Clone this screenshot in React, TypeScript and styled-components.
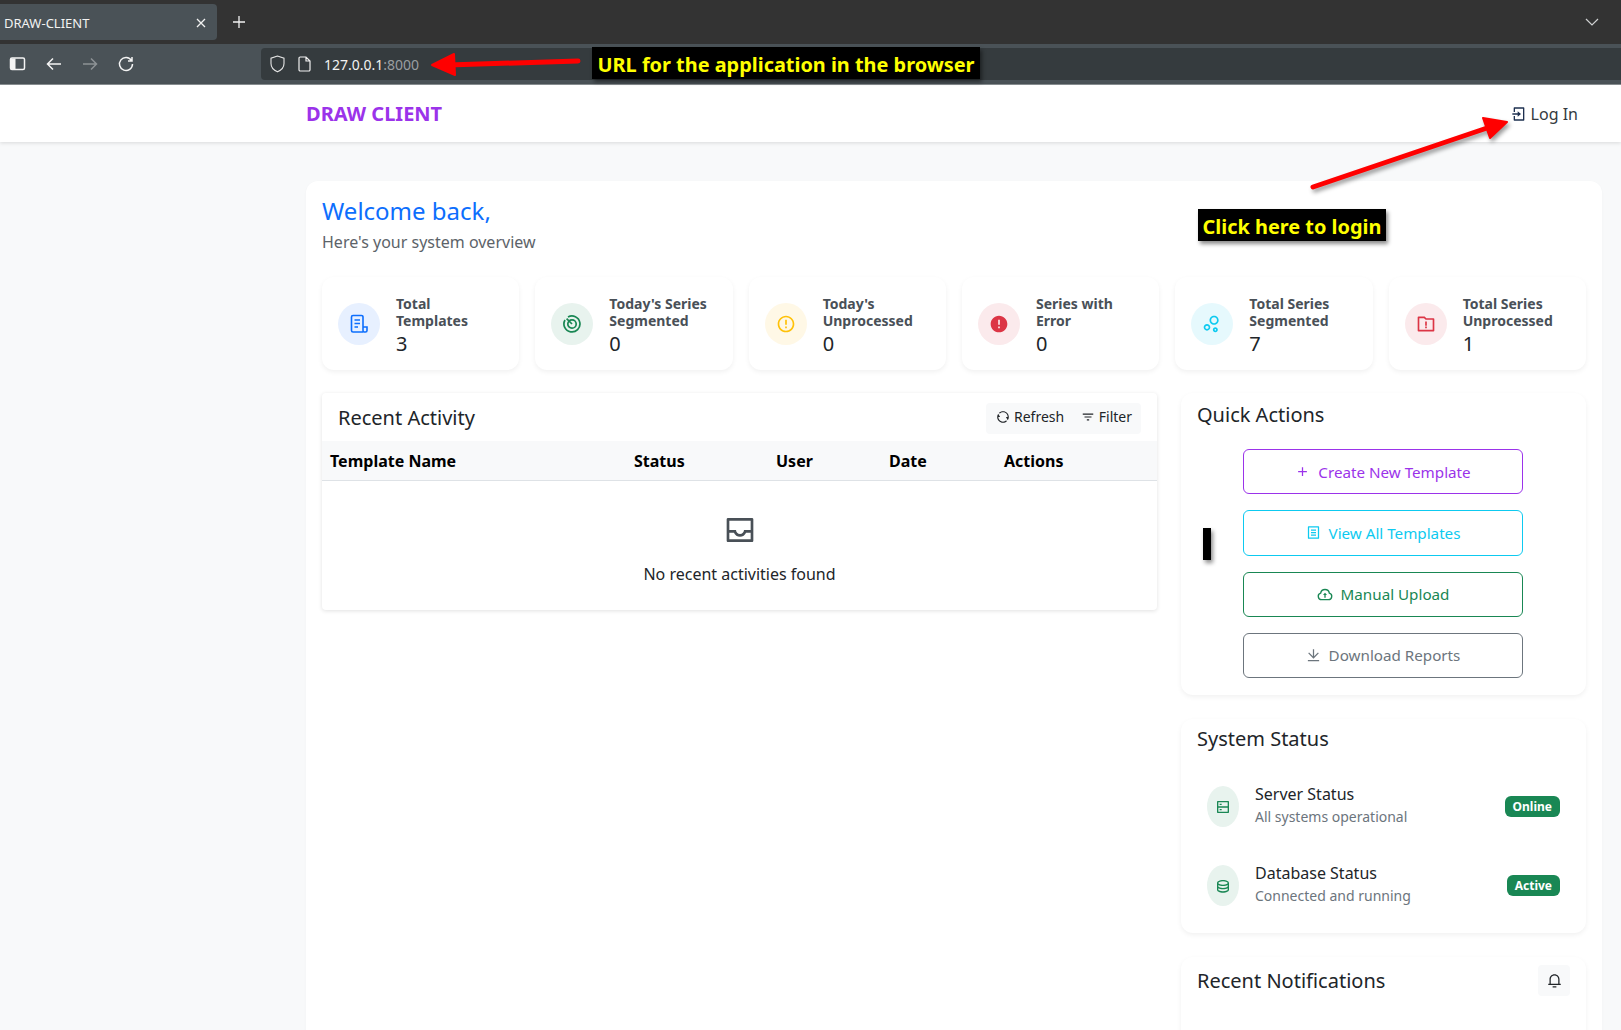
import React from "react";
import styled, { createGlobalStyle } from "styled-components";
import {
  RiAddLine,
  RiBubbleChartLine,
  RiDatabase2Line,
  RiDownloadLine,
  RiErrorWarningFill,
  RiErrorWarningLine,
  RiFileListLine,
  RiFilter3Line,
  RiFolderWarningLine,
  RiInboxLine,
  RiLoginBoxLine,
  RiNotification3Line,
  RiRefreshLine,
  RiServerLine,
} from "react-icons/ri";

const GlobalStyle = createGlobalStyle`
  html, body {
    margin: 0;
    padding: 0;
    background: #f8f9fa;
    overflow: hidden;
  }
  * { box-sizing: border-box; }
  body {
    font-family: "Noto Sans", "Liberation Sans", sans-serif;
    color: #212529;
  }
`;

const Root = styled.div`
  position: relative;
  width: 1621px;
  height: 1030px;
  overflow: hidden;
`;

/* browser chrome */
const TabStrip = styled.div`
  height: 44px;
  background: #333333;
  display: flex;
  align-items: center;
  justify-content: space-between;
  padding: 0 22px 0 0;
`;

const TabGroup = styled.div`
  display: flex;
  align-items: center;
`;

const Tab = styled.div`
  width: 217px;
  height: 36px;
  background: #4a5257;
  border-radius: 0 4px 4px 0;
  color: #f2f2f2;
  font-size: 13px;
  display: flex;
  align-items: center;
  justify-content: space-between;
  padding: 1px 11px 0 4px;
`;

const NewTab = styled.div`
  margin-left: 15px;
  display: flex;
`;

const Toolbar = styled.div`
  height: 41px;
  background: #4a5257;
  border-bottom: 1px solid #8a9094;
  display: flex;
  align-items: flex-start;
  padding: 4px 0 0 9px;
`;

const ToolIcons = styled.div`
  width: 252px;
  height: 32px;
  display: flex;
  align-items: center;
  gap: 18px;
`;

const ToolGlyph = styled.span<{ $dim?: boolean }>`
  display: flex;
  color: ${(p) => (p.$dim ? "#8d9295" : "#f4f4f4")};
`;

const UrlBar = styled.div`
  flex: 1;
  height: 32px;
  background: #353b3e;
  border-radius: 4px 0 0 4px;
  display: flex;
  align-items: center;
  padding-left: 9px;
  gap: 13px;
  font-size: 14px;
  color: #f2f2f2;
`;

const UrlPort = styled.span`
  color: #9a9ea1;
`;

const UrlGlyph = styled.span`
  display: flex;
`;

/* page nav */
const Nav = styled.nav`
  height: 57px;
  background: #ffffff;
  box-shadow: 0 1px 4px rgba(0, 0, 0, 0.13);
  display: flex;
  align-items: center;
  justify-content: space-between;
  padding: 0 43px 0 306px;
  position: relative;
`;

const Brand = styled.div`
  font-size: 20px;
  font-weight: 700;
  color: #9b33ea;
`;

const LoginLink = styled.div`
  display: flex;
  align-items: center;
  gap: 4px;
  font-size: 16px;
  color: #343a40;
  svg { color: #1e3050; }
`;

/* dashboard */
const Page = styled.main`
  padding: 39px 19px 0 306px;
`;

const MainCard = styled.section`
  background: #ffffff;
  border-radius: 12px 12px 0 0;
  padding: 15px 16px 0;
  height: 900px;
  box-shadow: 0 1px 3px rgba(0, 0, 0, 0.03);
`;

const Welcome = styled.h1`
  margin: 0;
  font-size: 24px;
  font-weight: 400;
  line-height: 29px;
  color: #0d6efd;
`;

const Overview = styled.p`
  margin: 5px 0 0;
  font-size: 16px;
  line-height: 24px;
  color: #5c6369;
`;

const StatGrid = styled.div`
  display: grid;
  grid-template-columns: repeat(6, 1fr);
  gap: 16px;
  margin-top: 23px;
`;

const StatCard = styled.div`
  height: 93px;
  background: #ffffff;
  border-radius: 12px;
  box-shadow: 0 2px 5px rgba(0, 0, 0, 0.06);
  display: flex;
  align-items: center;
  gap: 16px;
  padding: 0 16px;
`;

const StatIcon = styled.div<{ $bg: string; $fg: string }>`
  flex: none;
  width: 42px;
  height: 42px;
  border-radius: 50%;
  background: ${(p) => p.$bg};
  color: ${(p) => p.$fg};
  display: flex;
  align-items: center;
  justify-content: center;
  font-size: 20px;
`;

const StatBody = styled.div`
  padding-top: 4px;
`;

const StatTitle = styled.div`
  font-size: 14px;
  font-weight: 700;
  line-height: 17px;
  color: #495057;
`;

const StatValue = styled.div`
  font-size: 20px;
  line-height: 27px;
  margin-top: 1px;
`;

const Columns = styled.div`
  display: grid;
  grid-template-columns: 835px 405px;
  gap: 24px;
  margin-top: 23px;
  align-items: start;
`;

const Side = styled.div`
  display: flex;
  flex-direction: column;
  gap: 24px;
`;

const Panel = styled.div<{ $grow?: boolean }>`
  background: #ffffff;
  border-radius: 12px;
  box-shadow: 0 2px 5px rgba(0, 0, 0, 0.06);
  padding: 6px 16px 8px;
  min-height: ${(p) => (p.$grow ? "200px" : "0")};
`;

const ActionsPanel = styled(Panel)`
  padding: 8px 16px 17px;
`;

const ActivityPanel = styled.div`
  background: #ffffff;
  border-radius: 4px;
  box-shadow: 0 1px 4px rgba(0, 0, 0, 0.12);
  height: 217px;
`;

const ActivityHead = styled.div`
  height: 48px;
  display: flex;
  align-items: center;
  justify-content: space-between;
  padding: 2px 16px 0;
`;

const PanelTitle = styled.h2`
  margin: 0;
  font-size: 20px;
  font-weight: 400;
  line-height: 28px;
  color: #212529;
`;

const ToolGroup = styled.div`
  width: 155px;
  height: 31px;
  background: #f8f9fa;
  border-radius: 4px;
  display: flex;
  align-items: center;
  justify-content: space-between;
  padding: 0 9px 3px 10px;
  font-size: 14px;
`;

const ToolItem = styled.span`
  display: flex;
  align-items: center;
  gap: 4px;
`;

const Table = styled.table`
  width: 100%;
  border-collapse: collapse;
  table-layout: fixed;
`;

const HeadCell = styled.th<{ $w?: number }>`
  width: ${(p) => (p.$w ? `${p.$w}px` : "auto")};
  height: 39px;
  padding: 2px 8px 0;
  background: #f8f9fa;
  border-bottom: 1px solid #dee2e6;
  text-align: left;
  font-size: 16px;
  font-weight: 700;
  color: #000000;
`;

const EmptyCell = styled.td`
  padding: 33px 0 0;
  text-align: center;
  font-size: 16px;
  color: #212529;
`;

const EmptyIcon = styled.div`
  height: 36px;
  display: flex;
  justify-content: center;
  color: #495057;
  margin-bottom: 13px;
`;

const ActionList = styled.div`
  width: 280px;
  margin: 20px 0 0 46px;
  display: flex;
  flex-direction: column;
  gap: 16px;
`;

const ActionButton = styled.div<{ $color: string }>`
  height: 45.25px;
  border: 1px solid ${(p) => p.$color};
  border-radius: 6px;
  color: ${(p) => p.$color};
  font-size: 15.2px;
  display: flex;
  align-items: center;
  justify-content: center;
  gap: 8px;
`;

const StatusList = styled.div`
  margin-top: 14px;
`;

const StatusRow = styled.div`
  display: flex;
  align-items: center;
  padding: 0 10px;
  height: 79px;
`;

const StatusIcon = styled.div`
  flex: none;
  width: 32px;
  height: 41px;
  border-radius: 50%;
  background: #e8f3ee;
  color: #198754;
  display: flex;
  align-items: center;
  justify-content: center;
  font-size: 16px;
`;

const StatusText = styled.div`
  flex: 1;
  margin: -3px 0 0 16px;
`;

const StatusName = styled.div`
  font-size: 16px;
  line-height: 22px;
`;

const StatusNote = styled.div`
  font-size: 14px;
  line-height: 22px;
  margin-top: 1px;
  color: #6c757d;
`;

const Badge = styled.span`
  background: #198754;
  color: #ffffff;
  border-radius: 6px;
  font-size: 12px;
  font-weight: 700;
  line-height: 21px;
  padding: 0 8px;
`;

const NoticeHead = styled.div`
  display: flex;
  align-items: center;
  justify-content: space-between;
  padding-top: 2px;
`;

const BellButton = styled.div`
  width: 32px;
  height: 31px;
  background: #f8f9fa;
  border-radius: 4px;
  display: flex;
  align-items: center;
  justify-content: center;
  font-size: 15px;
`;

/* annotations drawn over the shot */
const Note = styled.div<{ $x: number; $y: number; $w: number; $h: number }>`
  position: absolute;
  left: ${(p) => p.$x}px;
  top: ${(p) => p.$y}px;
  width: ${(p) => p.$w}px;
  height: ${(p) => p.$h}px;
  background: #000000;
  color: #ffff00;
  font-size: 19.9px;
  font-weight: 700;
  line-height: ${(p) => p.$h + 3}px;
  text-align: center;
  white-space: nowrap;
  box-shadow: 2px 3px 4px rgba(0, 0, 0, 0.45);
`;

const Overlay = styled.svg`
  position: absolute;
  left: 0;
  top: 0;
  pointer-events: none;
`;

const ShadowedArrow = styled.g`
  filter: drop-shadow(2px 3px 2px rgba(0, 0, 0, 0.4));
`;

const TemplateIcon = () => (
  <svg width="20" height="20" viewBox="0 0 20 20" fill="none" stroke="currentColor" strokeWidth="1.6">
    <path d="M14 18H4a1.5 1.5 0 0 1-1.5-1.5V3A1.5 1.5 0 0 1 4 1.5h8.5A1.5 1.5 0 0 1 14 3v13.5a1.5 1.5 0 0 0 1.7 1.5h.8a1.5 1.5 0 0 0 1.5-1.5V13h-4" />
    <path d="M5.5 6h5.5M5.5 9.5h5.5M5.5 13h3.5" />
  </svg>
);

const SegmentIcon = () => (
  <svg width="20" height="20" viewBox="0 0 20 20" fill="none" stroke="currentColor" strokeWidth="1.7">
    <path d="M6 3A8 8 0 1 1 3 6" />
    <circle cx="10" cy="10" r="4.2" />
    <path d="M4.6 4.6L10 10" />
  </svg>
);

const UploadIcon = () => (
  <svg width="16" height="16" viewBox="0 0 24 24" fill="none" stroke="currentColor" strokeWidth="2">
    <path d="M7 20.5h10a5 5 0 0 0 1.5-9.8 6.6 6.6 0 0 0-13 0 5 5 0 0 0 1.5 9.8z" />
    <path d="M12 17.5v-4" />
    <path d="M9 13.5L12 10l3 3.5z" fill="currentColor" stroke="none" />
  </svg>
);

const stats = [
  { title: ["Total", "Templates"], value: 3, bg: "#e7f0ff", fg: "#0d6efd", icon: <TemplateIcon /> },
  { title: ["Today's Series", "Segmented"], value: 0, bg: "#e8f3ee", fg: "#198754", icon: <SegmentIcon /> },
  { title: ["Today's", "Unprocessed"], value: 0, bg: "#fff8e6", fg: "#ffc107", icon: <RiErrorWarningLine /> },
  { title: ["Series with", "Error"], value: 0, bg: "#fbeaec", fg: "#dc3545", icon: <RiErrorWarningFill /> },
  { title: ["Total Series", "Segmented"], value: 7, bg: "#e6f9fd", fg: "#0dcaf0", icon: <RiBubbleChartLine /> },
  { title: ["Total Series", "Unprocessed"], value: 1, bg: "#fbeaec", fg: "#dc3545", icon: <RiFolderWarningLine /> },
];

const actions = [
  { label: "Create New Template", color: "#9b33ea", icon: <RiAddLine size={15} /> },
  { label: "View All Templates", color: "#0dcaf0", icon: <RiFileListLine size={15} /> },
  { label: "Manual Upload", color: "#198754", icon: <UploadIcon /> },
  { label: "Download Reports", color: "#6c757d", icon: <RiDownloadLine size={15} /> },
];

const Stroke = ({ children }: { children: React.ReactNode }) => (
  <svg width="18" height="18" viewBox="0 0 18 18" fill="none" stroke="currentColor" strokeWidth="1.5">
    {children}
  </svg>
);

export default function App() {
  return (
    <Root>
      <GlobalStyle />
      <TabStrip>
        <TabGroup>
          <Tab>
            DRAW-CLIENT
            <svg width="10" height="10" viewBox="0 0 10 10" stroke="#f2f2f2" strokeWidth="1.3">
              <path d="M1 1l8 8M9 1l-8 8" />
            </svg>
          </Tab>
          <NewTab>
            <svg width="14" height="14" viewBox="0 0 14 14" stroke="#f2f2f2" strokeWidth="1.3">
              <path d="M7 1v12M1 7h12" />
            </svg>
          </NewTab>
        </TabGroup>
        <svg width="14" height="8" viewBox="0 0 14 8" fill="none" stroke="#cfd1d2" strokeWidth="1.2">
          <path d="M1 1l6 6 6-6" />
        </svg>
      </TabStrip>
      <Toolbar>
        <ToolIcons>
          <ToolGlyph>
            <Stroke>
              <rect x="1.5" y="3" width="14" height="11.5" rx="1.5" />
              <rect x="2" y="3.5" width="4.5" height="10.5" fill="currentColor" stroke="none" />
            </Stroke>
          </ToolGlyph>
          <ToolGlyph>
            <Stroke>
              <path d="M16 9H3M8 3.5L2.5 9 8 14.5" />
            </Stroke>
          </ToolGlyph>
          <ToolGlyph $dim>
            <Stroke>
              <path d="M2 9h13M10 3.5L15.5 9 10 14.5" />
            </Stroke>
          </ToolGlyph>
          <ToolGlyph>
            <Stroke>
              <path d="M14.5 5.5A6.5 6.5 0 1 0 15.5 9M15 2v4h-4" />
            </Stroke>
          </ToolGlyph>
        </ToolIcons>
        <UrlBar>
          <UrlGlyph>
            <svg width="15" height="18" viewBox="0 0 15 18" fill="none" stroke="#e6e6e6" strokeWidth="1.1">
              <path d="M7.5 1L1 3.2v5.3c0 4 3 6.8 6.5 8.3 3.5-1.5 6.5-4.3 6.5-8.3V3.2z" />
            </svg>
          </UrlGlyph>
          <UrlGlyph>
            <svg width="13" height="16" viewBox="0 0 13 16" fill="none" stroke="#f0f0f0" strokeWidth="1.2">
              <path d="M1 2.2A1.2 1.2 0 0 1 2.2 1H8l4 4v8.8a1.2 1.2 0 0 1-1.2 1.2H2.2A1.2 1.2 0 0 1 1 13.8zM8 1v4h4" />
            </svg>
          </UrlGlyph>
          <span>
            127.0.0.1<UrlPort>:8000</UrlPort>
          </span>
        </UrlBar>
      </Toolbar>

      <Nav>
        <Brand>DRAW CLIENT</Brand>
        <LoginLink>
          <RiLoginBoxLine size={16} />
          Log In
        </LoginLink>
      </Nav>

      <Page>
        <MainCard>
          <Welcome>Welcome back,</Welcome>
          <Overview>Here's your system overview</Overview>

          <StatGrid>
            {stats.map((s) => (
              <StatCard key={s.title.join(" ")}>
                <StatIcon $bg={s.bg} $fg={s.fg}>
                  {s.icon}
                </StatIcon>
                <StatBody>
                  <StatTitle>
                    {s.title[0]}
                    <br />
                    {s.title[1]}
                  </StatTitle>
                  <StatValue>{s.value}</StatValue>
                </StatBody>
              </StatCard>
            ))}
          </StatGrid>

          <Columns>
            <ActivityPanel>
              <ActivityHead>
                <PanelTitle>Recent Activity</PanelTitle>
                <ToolGroup>
                  <ToolItem>
                    <RiRefreshLine size={14} />
                    Refresh
                  </ToolItem>
                  <ToolItem>
                    <RiFilter3Line size={14} />
                    Filter
                  </ToolItem>
                </ToolGroup>
              </ActivityHead>
              <Table>
                <thead>
                  <tr>
                    <HeadCell $w={304}>Template Name</HeadCell>
                    <HeadCell $w={142}>Status</HeadCell>
                    <HeadCell $w={113}>User</HeadCell>
                    <HeadCell $w={115}>Date</HeadCell>
                    <HeadCell>Actions</HeadCell>
                  </tr>
                </thead>
                <tbody>
                  <tr>
                    <EmptyCell colSpan={5}>
                      <EmptyIcon>
                        <RiInboxLine size={32} />
                      </EmptyIcon>
                      No recent activities found
                    </EmptyCell>
                  </tr>
                </tbody>
              </Table>
            </ActivityPanel>

            <Side>
              <ActionsPanel>
                <PanelTitle>Quick Actions</PanelTitle>
                <ActionList>
                  {actions.map((a) => (
                    <ActionButton key={a.label} $color={a.color}>
                      {a.icon}
                      {a.label}
                    </ActionButton>
                  ))}
                </ActionList>
              </ActionsPanel>

              <Panel>
                <PanelTitle>System Status</PanelTitle>
                <StatusList>
                  <StatusRow>
                    <StatusIcon>
                      <RiServerLine />
                    </StatusIcon>
                    <StatusText>
                      <StatusName>Server Status</StatusName>
                      <StatusNote>All systems operational</StatusNote>
                    </StatusText>
                    <Badge>Online</Badge>
                  </StatusRow>
                  <StatusRow>
                    <StatusIcon>
                      <RiDatabase2Line />
                    </StatusIcon>
                    <StatusText>
                      <StatusName>Database Status</StatusName>
                      <StatusNote>Connected and running</StatusNote>
                    </StatusText>
                    <Badge>Active</Badge>
                  </StatusRow>
                </StatusList>
              </Panel>

              <Panel $grow>
                <NoticeHead>
                  <PanelTitle>Recent Notifications</PanelTitle>
                  <BellButton>
                    <RiNotification3Line />
                  </BellButton>
                </NoticeHead>
              </Panel>
            </Side>
          </Columns>
        </MainCard>
      </Page>

      <Note $x={592} $y={47} $w={388} $h={32}>
        URL for the application in the browser
      </Note>
      <Note $x={1198} $y={209} $w={188} $h={32}>
        Click here to login
      </Note>
      <Note $x={1203} $y={528} $w={8} $h={32} />
      <Overlay width="1621" height="1030" viewBox="0 0 1621 1030" fill="none">
        <path d="M578 61L448 65" stroke="#ff0000" strokeWidth="5" strokeLinecap="round" />
        <path d="M432 65L454 54L455 75Z" fill="#ff0000" stroke="#ff0000" strokeWidth="2" strokeLinejoin="round" />
        <ShadowedArrow>
          <path d="M1313 187L1490 127" stroke="#ff0000" strokeWidth="5" strokeLinecap="round" />
          <path d="M1507 122L1483 118L1490 138Z" fill="#ff0000" stroke="#ff0000" strokeWidth="2" strokeLinejoin="round" />
        </ShadowedArrow>
      </Overlay>
    </Root>
  );
}
